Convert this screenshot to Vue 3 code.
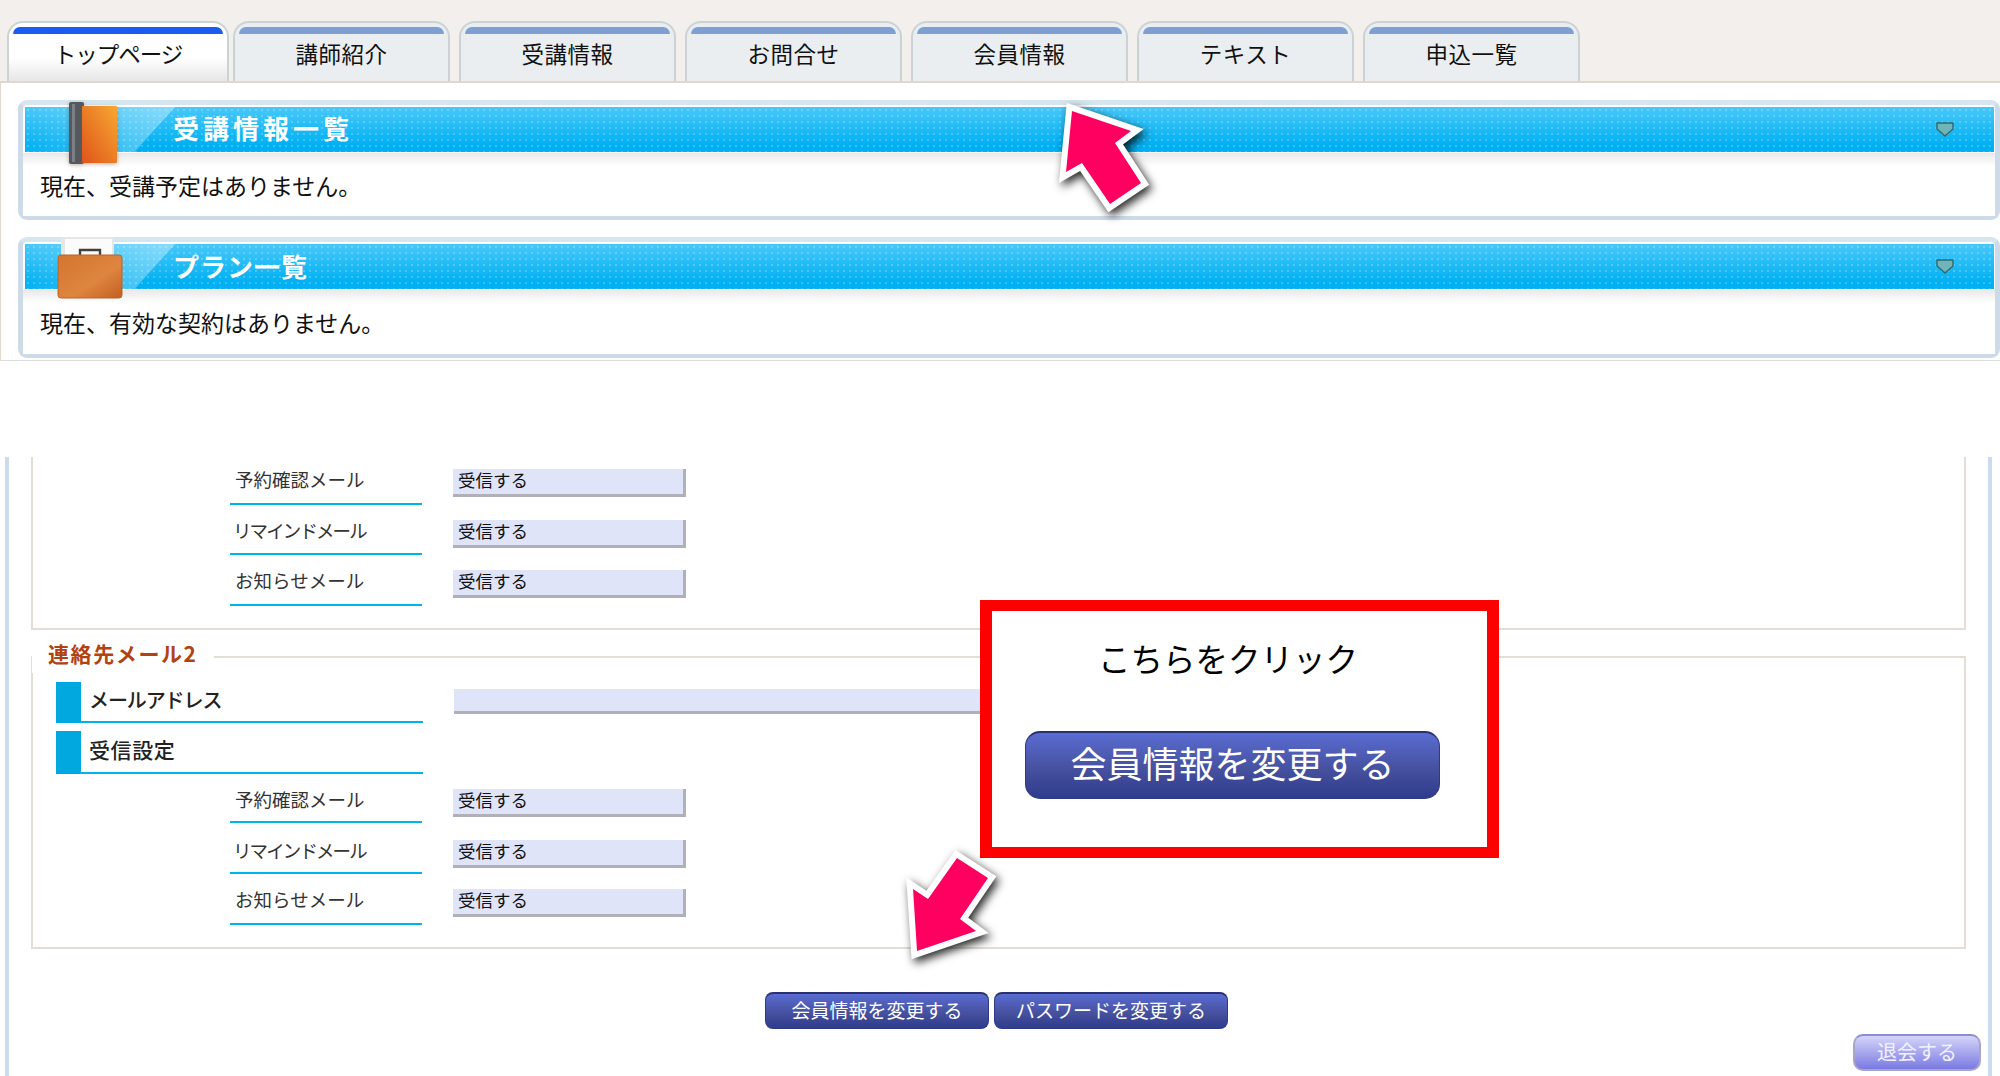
<script setup>
const tabs = ['トップページ', '講師紹介', '受講情報', 'お問合せ', '会員情報', 'テキスト', '申込一覧']

const panels = [
  { title: '受講情報一覧', text: '現在、受講予定はありません。', icon: 'book' },
  { title: 'プラン一覧', text: '現在、有効な契約はありません。', icon: 'case' }
]

const mailRows = [
  { label: '予約確認メール', cls: 'row-a' },
  { label: 'リマインドメール', cls: 'row-b narrow' },
  { label: 'お知らせメール', cls: 'row-c' }
]

const mailRows2 = [
  { label: '予約確認メール', cls: 'row-d' },
  { label: 'リマインドメール', cls: 'row-e narrow' },
  { label: 'お知らせメール', cls: 'row-c' }
]
</script>

<template>
  <div class="page">
    <div class="tabbar">
      <div v-for="(tab, i) in tabs" :key="tab" class="tab" :class="{ active: i === 0 }">
        <span class="tab-band"></span>
        <span class="tab-label">{{ tab }}</span>
      </div>
    </div>

    <div class="main">
      <section v-for="panel in panels" :key="panel.title" class="panel">
        <div class="panel-head">
          <span class="sheen"></span>
          <svg v-if="panel.icon === 'book'" class="icon-book" viewBox="0 0 52 64">
            <defs>
              <linearGradient id="bookFill" x1="1" y1="0" x2="0" y2="1">
                <stop offset="0" stop-color="#f6a832" />
                <stop offset="1" stop-color="#e0541a" />
              </linearGradient>
            </defs>
            <rect x="2" y="1" width="15" height="62" rx="2" fill="#55595e" />
            <rect x="5" y="3" width="3" height="58" fill="#7b8086" />
            <rect x="15" y="5" width="35" height="57" rx="1" fill="url(#bookFill)" />
          </svg>
          <svg v-else class="icon-case" viewBox="0 0 66 62">
            <defs>
              <linearGradient id="caseFill" x1="0" y1="0" x2="1" y2="1">
                <stop offset="0" stop-color="#d2752f" />
                <stop offset="0.6" stop-color="#de853f" />
                <stop offset="1" stop-color="#c25f22" />
              </linearGradient>
            </defs>
            <rect x="4" y="0" width="53" height="24" fill="#e6e6e6" />
            <rect x="8" y="2" width="47" height="22" fill="#fbfbfb" />
            <path d="M23 19v-6h20v6" fill="none" stroke="#44403c" stroke-width="2.4" />
            <rect x="1" y="18" width="64" height="43" rx="3" fill="url(#caseFill)" stroke="#bf6226" />
          </svg>
          <h2 class="panel-title" :class="{ tight: panel.icon === 'case' }">{{ panel.title }}</h2>
          <svg class="toggle" viewBox="0 0 18 15">
            <path d="M1 1h16v6l-8 7-8-7z" fill="#6fb4b8" stroke="#2f6a70" stroke-width="1.4" />
          </svg>
        </div>
        <div class="panel-body">{{ panel.text }}</div>
      </section>
    </div>

    <div class="lower">
      <div class="group group-cut">
        <div v-for="row in mailRows" :key="row.label" class="row" :class="row.cls">
          <div class="row-label">{{ row.label }}</div>
          <div class="value">受信する</div>
        </div>
      </div>

      <fieldset class="group group-2">
        <legend>連絡先メール2</legend>
        <div class="head-row">
          <div class="head-label"><span class="mark"></span><span class="head-mail">メールアドレス</span></div>
          <div class="value value-wide"></div>
        </div>
        <div class="head-row head-row-2">
          <div class="head-label"><span class="mark"></span><span class="head-recv">受信設定</span></div>
        </div>
        <div v-for="row in mailRows2" :key="row.label" class="row" :class="row.cls">
          <div class="row-label">{{ row.label }}</div>
          <div class="value">受信する</div>
        </div>
      </fieldset>

      <div class="actions">
        <button class="btn btn-member" type="button">会員情報を変更する</button>
        <button class="btn btn-pass" type="button">パスワードを変更する</button>
      </div>
      <button class="btn-leave" type="button">退会する</button>
    </div>

    <div class="callout">
      <p class="callout-text">こちらをクリック</p>
      <button class="btn btn-big" type="button">会員情報を変更する</button>
    </div>

    <svg class="arrow arrow-up" viewBox="1040 85 130 135">
      <polygon points="1070,111 1129,131 1113,143 1139,183 1108,204 1080,163 1064,172" />
    </svg>
    <svg class="arrow arrow-down" viewBox="890 840 110 125">
      <polygon points="954,858 985,878 957,919 973,931 914,951 910,889 925,899" />
    </svg>
  </div>
</template>

<style scoped>
.page {
  position: relative;
  width: 2000px;
  height: 1076px;
  overflow: hidden;
  background: #fff;
  color: #111;
  font-family: "Noto Sans CJK JP", "Liberation Sans", sans-serif;
}

.tabbar {
  display: flex;
  align-items: flex-end;
  gap: 9px;
  height: 81px;
  padding-left: 7px;
  background: #f3efec;
  border-bottom: 2px solid #e0d8cc;
}

.tab {
  display: flex;
  flex-direction: column;
  width: 217px;
  height: 60px;
  box-sizing: border-box;
  border: 2px solid #c9d3d6;
  border-bottom: 0;
  border-radius: 16px 16px 0 0;
  background: #eaeef0;
}

.tab.active {
  width: 222px;
  margin-right: -5px;
  background: linear-gradient(#fff 60%, #e6e6e6);
}

.tab-band {
  height: 7px;
  margin: 4px 4px 0;
  border-radius: 10px 10px 0 0;
  background: #7f9fd2;
}

.active .tab-band {
  background: #1a5cf0;
}

.tab-label {
  line-height: 38px;
  font-size: 22.5px;
  letter-spacing: 0.5px;
  text-align: center;
}

.active .tab-label {
  letter-spacing: -1px;
}

.main {
  display: flex;
  flex-direction: column;
  gap: 17px;
  padding: 17px 0 2px 17px;
  border-left: 1px solid #e0d8cc;
  border-bottom: 1px solid #ddd;
}

.panel {
  padding-top: 2px;
  box-sizing: border-box;
  border: 5px solid #cddbe9;
  border-top-color: #d6e6ef;
  border-radius: 9px;
}

.panel-head {
  position: relative;
  display: flex;
  align-items: center;
  justify-content: space-between;
  height: 45px;
  margin: 0 1px 0 2px;
  padding: 0 40px 0 148px;
  background-color: #14b4f0;
  background-image:
    radial-gradient(circle, rgba(255, 255, 255, 0.22) 1px, transparent 1.4px),
    linear-gradient(#48c8fa, #00b0f2 85%);
  background-size: 6px 6px, 100% 100%;
}

.sheen {
  position: absolute;
  left: 0;
  top: 0;
  width: 150px;
  height: 100%;
  background: linear-gradient(100deg, rgba(255, 255, 255, 0), rgba(255, 255, 255, 0.38));
  clip-path: polygon(0 0, 100% 0, 73% 100%, 0 100%);
}

.icon-book {
  position: absolute;
  left: 42px;
  top: -6px;
  width: 52px;
  height: 64px;
  filter: drop-shadow(0 1px 2px rgba(90, 60, 40, 0.4));
}

.icon-case {
  position: absolute;
  left: 32px;
  top: -7px;
  width: 66px;
  height: 62px;
}

.panel-title {
  position: relative;
  margin: 0 0 4px;
  color: #fff;
  font-size: 26px;
  font-weight: 700;
  letter-spacing: 4px;
  line-height: 41px;
}

.panel-title.tight {
  margin-bottom: 2px;
  letter-spacing: 1px;
}

.toggle {
  width: 18px;
  height: 15px;
}

.panel-body {
  height: 63px;
  box-sizing: border-box;
  padding: 17px 0 0 17px;
  font-size: 23px;
  line-height: 30px;
  background: linear-gradient(#e9e9e9, #fff 13px);
  margin-top: 1px;
  margin-bottom: -1px;
}

.panel + .panel .panel-body {
  height: 64px;
}

.lower {
  display: flex;
  flex-direction: column;
  width: 1979px;
  height: 619px;
  margin: 96px 0 0 5px;
  border-left: 4px solid #cddbef;
  border-right: 4px solid #cddbef;
}

.group {
  width: 1935px;
  margin: 0 0 0 22px;
  box-sizing: border-box;
  border: 2px solid #e2ded4;
  min-inline-size: 0;
}

.group-cut {
  height: 173px;
  border-top: 0;
}

.group-2 {
  height: 308px;
  margin-top: 11px;
  padding: 9px 0 0;
}

legend {
  margin-left: -1px;
  padding: 0 16px 8px;
  font-size: 21px;
  font-weight: 700;
  letter-spacing: 1.6px;
  line-height: 24px;
  color: #b34212;
}

.head-row {
  display: flex;
  height: 41px;
  margin-left: 23px;
}

.head-row-2 {
  height: 43px;
  margin-top: 8px;
}

.head-label {
  display: flex;
  align-items: center;
  width: 367px;
  box-sizing: border-box;
  border-bottom: 2px solid #00b4e8;
  font-size: 20px;
  font-weight: 500;
  color: #222;
}

.mark {
  align-self: stretch;
  width: 25px;
  margin: 0 8px -2px 0;
  background: #00a8e0;
}

.head-mail {
  margin-bottom: 4px;
  letter-spacing: -1.1px;
}

.head-recv {
  margin-bottom: 5px;
  font-size: 21px;
  letter-spacing: 0.6px;
}

.value {
  width: 233px;
  height: 28px;
  box-sizing: border-box;
  margin-left: 31px;
  padding-left: 5px;
  background: #e0e4f8;
  border-right: 3px solid #b0b0b8;
  border-bottom: 3px solid #b0b0b8;
  font-size: 17.5px;
  line-height: 22px;
}

.value-wide {
  width: 600px;
  height: 25px;
  margin-top: 7px;
  border-right: 0;
}

.row {
  display: flex;
  height: var(--h);
  margin-left: 197px;
}

.row-label {
  width: 192px;
  box-sizing: border-box;
  padding: calc(var(--off) - 2px) 0 0 5px;
  border-bottom: 2px solid #00b4e8;
  font-size: 18.5px;
  line-height: 24px;
  color: #333;
}

.narrow .row-label {
  padding-left: 3px;
  letter-spacing: -1.9px;
}

.row .value {
  margin-top: var(--off);
}

.row-a { --h: 48px; --off: 12px; }
.row-b { --h: 50px; --off: 15px; }
.row-c { --h: 51px; --off: 15px; }
.row-d { --h: 49px; --off: 15px; }
.row-e { --h: 51px; --off: 17px; }

.actions {
  display: flex;
  justify-content: center;
  gap: 5px;
  margin-top: 43px;
  padding-right: 4px;
}

.btn {
  height: 37px;
  padding: 0 0 4px;
  color: #fff;
  font-family: inherit;
  font-size: 19px;
  border: 1px solid #2d3a86;
  border-top: 2px solid #2a3070;
  border-radius: 8px;
  background: linear-gradient(#5a6cd2, #46519f 55%, #2f3b8c);
}

.btn-member {
  width: 224px;
}

.btn-pass {
  width: 234px;
}

.btn-leave {
  align-self: flex-end;
  width: 128px;
  height: 37px;
  margin: 5px 7px 0 0;
  padding: 0 0 3px;
  color: #f2f2ff;
  font-family: inherit;
  font-size: 20px;
  border: 2px solid #a6a6c8;
  border-top-color: #8c8cd0;
  border-radius: 10px;
  background: linear-gradient(#d4d4fa, #7a7ae2);
}

.callout {
  position: absolute;
  left: 980px;
  top: 600px;
  width: 519px;
  height: 258px;
  box-sizing: border-box;
  border-style: solid;
  border-color: #ff0000;
  border-width: 11px 12px;
  background: #fff;
}

.callout-text {
  margin: 22px 0 48px 106px;
  font-size: 32.5px;
  line-height: 50px;
  color: #000;
}

.btn-big {
  display: block;
  width: 415px;
  height: 68px;
  margin-left: 33px;
  padding-bottom: 8px;
  font-size: 36px;
  border-radius: 15px;
}

.arrow {
  position: absolute;
  overflow: visible;
  filter: drop-shadow(3px 4px 5px rgba(0, 0, 0, 0.85));
}

.arrow polygon {
  fill: #ff0060;
  stroke: #fff;
  stroke-width: 12px;
  stroke-linejoin: miter;
  stroke-miterlimit: 6;
  paint-order: stroke;
}

.arrow-up {
  left: 1042px;
  top: 85px;
  width: 130px;
  height: 135px;
}

.arrow-down {
  left: 893px;
  top: 840px;
  width: 110px;
  height: 125px;
}
</style>

<style>
html, body {
  margin: 0;
  background: #fff;
}
</style>
